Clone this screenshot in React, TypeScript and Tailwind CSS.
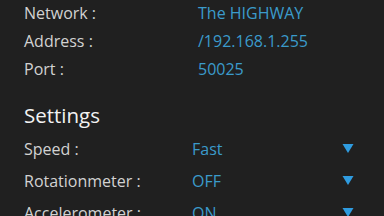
import React from "react";

const font = { fontFamily: '"Open Sans", "Noto Sans", sans-serif' };

function InfoRow({ label, value }: { label: string; value: string }) {
  return (
    <div className="flex h-[28px] items-center text-[16px] leading-[28px]">
      <div className="w-[174px] text-[#d2d2d2]">{label}</div>
      <div className="text-[#3b9bcb]">{value}</div>
    </div>
  );
}

function SettingRow({ label, value }: { label: string; value: string }) {
  return (
    <div className="flex h-[32px] items-center text-[16px] leading-[32px]">
      <div className="w-[168px] text-[#d2d2d2]">{label}</div>
      <div className="flex-1 text-[#3b9bcb]">{value}</div>
      <svg width="12" height="10" viewBox="0 0 12 10" className="mr-[30px]">
        <polygon points="0.5,0 11.5,0 6,9" fill="#2f9ce0" />
      </svg>
    </div>
  );
}

export default function App() {
  return (
    <div
      className="h-[216px] w-[384px] overflow-hidden bg-[#202020] pl-[24px]"
      style={font}
    >
      <div className="mt-[-1.5px] flex flex-col">
        <InfoRow label="Network :" value="The HIGHWAY" />
        <InfoRow label="Address :" value="/192.168.1.255" />
        <InfoRow label="Port :" value="50025" />
      </div>
      <div className="mt-[17px] h-[30px] text-[20.5px] leading-[30px] text-[#f2f2f2]">
        Settings
      </div>
      <div className="mt-[3px] flex flex-col">
        <SettingRow label="Speed :" value="Fast" />
        <SettingRow label="Rotationmeter :" value="OFF" />
        <SettingRow label="Accelerometer :" value="ON" />
      </div>
    </div>
  );
}
